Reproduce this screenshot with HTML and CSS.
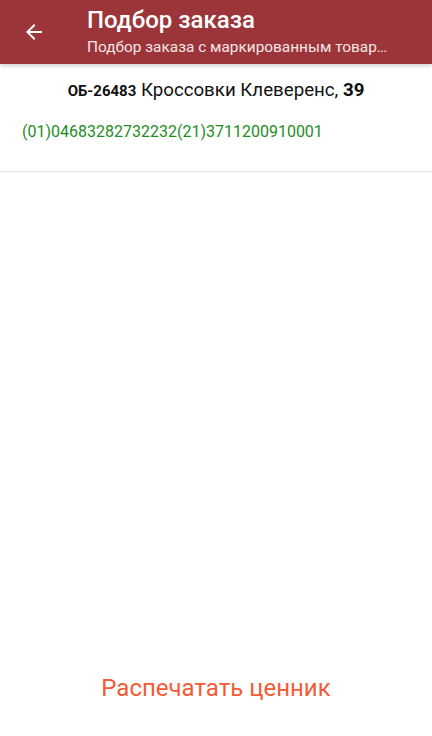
FILE: index.html
```html
<!DOCTYPE html>
<html lang="ru">
<head>
  <meta charset="UTF-8">
  <meta name="viewport" content="width=device-width, initial-scale=1.0">
  <title>Подбор заказа</title>
  <link rel="stylesheet" href="styles.css">
</head>
<body>
  <div class="screen">
    <header class="toolbar">
      <button class="back" type="button" aria-label="Назад">
        <svg width="24" height="24" viewBox="0 0 24 24">
          <path d="M20 11H7.83l5.59-5.59L12 4l-8 8 8 8 1.41-1.41L7.83 13H20v-2z" fill="#fff"/>
        </svg>
      </button>
      <div class="titles">
        <div class="title">Подбор заказа</div>
        <div class="subtitle">Подбор заказа с маркированным товаром</div>
      </div>
    </header>

    <div class="item">
      <div class="item-name"><b class="article">ОБ-26483</b> Кроссовки Клеверенс, <b>39</b></div>
      <div class="item-code">(01)04683282732232(21)3711200910001</div>
    </div>

    <div class="spacer"></div>

    <div class="actions">
      <button class="print" type="button">Распечатать ценник</button>
    </div>
  </div>
</body>
</html>
```

FILE: styles.css
```css
body {
  margin: 0;
  font-family: Roboto, "Noto Sans", sans-serif;
  background: #fff;
}

.screen {
  display: flex;
  flex-direction: column;
  height: 736px;
}

.toolbar {
  display: flex;
  align-items: center;
  height: 64px;
  background-color: #9b3539;
  color: #fff;
  box-shadow: 0 2px 4px rgba(0, 0, 0, 0.18);
  position: relative;
}

.back {
  width: 24px;
  height: 24px;
  margin: 0 41px 0 22px;
  padding: 0;
  border: none;
  background: none;
}

.titles {
  min-width: 0;
  flex: 1;
  padding-right: 40px;
}

.title {
  font-size: 24px;
  font-weight: 500;
  line-height: 28px;
  margin-top: -2px;
}

.subtitle {
  font-size: 15.4px;
  line-height: 20px;
  margin-top: 3px;
  color: #f3e6e6;
  white-space: nowrap;
  overflow: hidden;
  text-overflow: ellipsis;
}

.item {
  padding: 14px 22px 29px;
  border-bottom: 1px solid #e2e2e2;
}

.item-name {
  text-align: center;
  font-size: 18.7px;
  line-height: 24px;
  color: #111;
}

.item-name b {
  font-weight: 700;
}

.item-name .article {
  font-size: 15px;
}

.item-code {
  margin-top: 19px;
  font-size: 16px;
  line-height: 20px;
  color: #1f8c1f;
}

.spacer {
  flex: 1;
}

.actions {
  display: flex;
  justify-content: center;
  padding-bottom: 33px;
}

.print {
  border: none;
  background: none;
  font-family: Roboto, "Noto Sans", sans-serif;
  font-size: 24px;
  color: #f35b36;
  padding: 0;
  line-height: 30px;
}
```
